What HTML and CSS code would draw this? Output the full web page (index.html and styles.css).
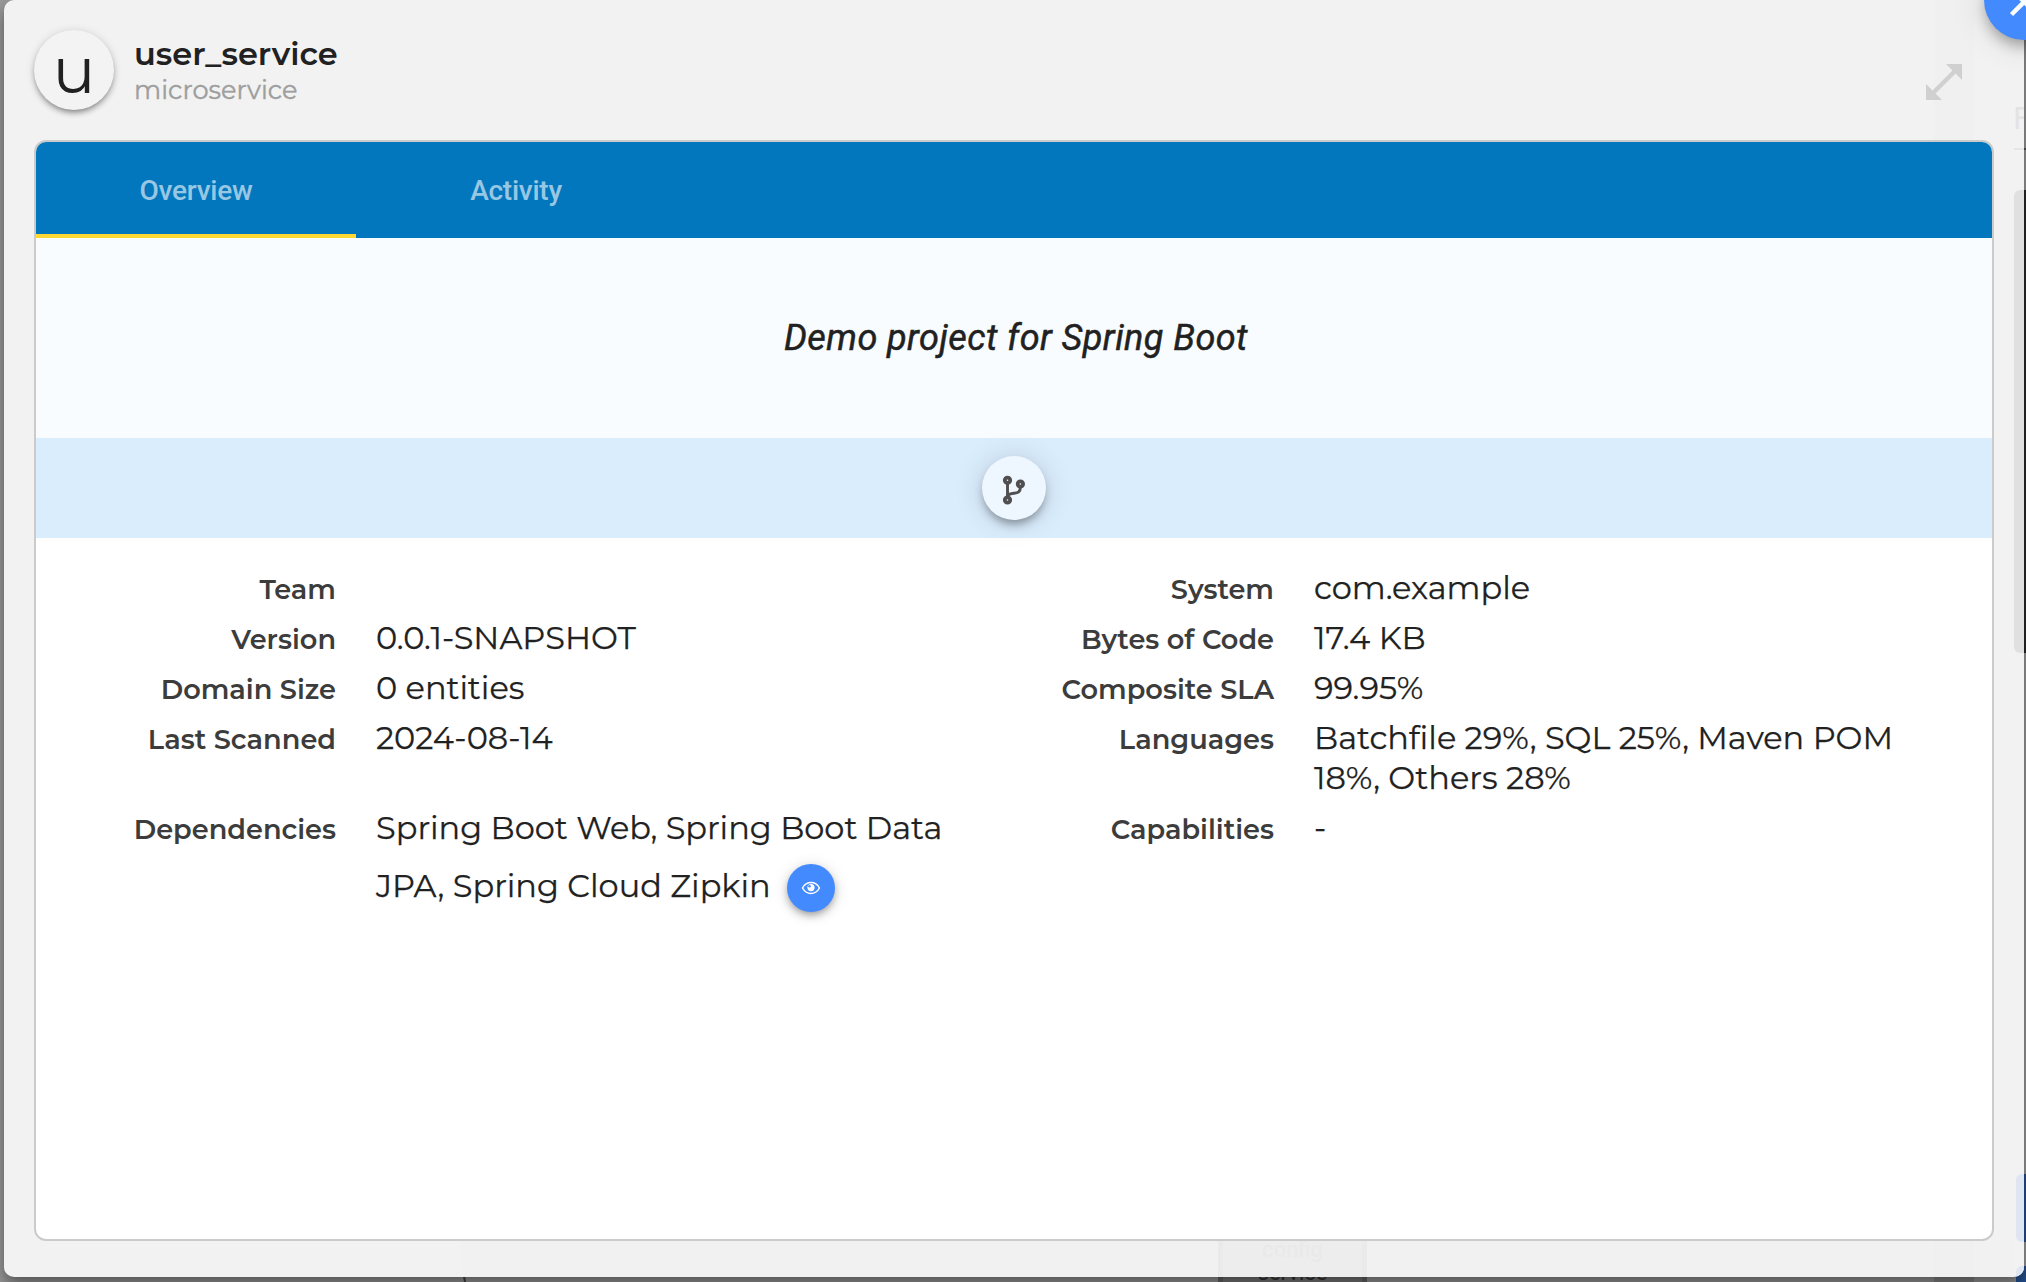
FILE: index.html
```html
<!DOCTYPE html>
<html lang="en">
<head>
<meta charset="utf-8">
<title>user_service</title>
<link rel="stylesheet" href="styles.css">
</head>
<body>
<div class="canvas" aria-hidden="true">
  <div class="rail"></div>
  <div class="rail-rule"></div>
  <div class="scroll-block"></div>
  <div class="chip chip-top"></div>
  <div class="chip chip-bottom"></div>
  <svg class="edge" width="20" height="42" viewBox="0 0 20 42"><path d="M2 0L9 42" stroke="#444" stroke-width="2"/></svg>
  <div class="node">service</div>
</div>
<main class="modal">
  <div class="ghost ghost-field"></div>
  <div class="ghost ghost-rail"></div>
  <div class="ghost ghost-block"></div>
  <div class="ghost ghost-chip"></div>
  <div class="ghost ghost-chip-low"></div>
  <div class="ghost ghost-rule"></div>
  <div class="ghost ghost-node">config</div>
  <div class="ghost ghost-letter">F</div>
  <header class="header">
    <div class="avatar">u</div>
    <div class="titles">
      <h1 class="name">user_service</h1>
      <p class="kind">microservice</p>
    </div>
    <svg class="expand" width="36" height="36" viewBox="0 0 36 36"><path d="M20 0h16v16zM0 20v16h16z" fill="#d0d0d0"/><path d="M6 30L30 6" stroke="#d0d0d0" stroke-width="4.500"/></svg>
  </header>
  <section class="panel">
    <nav class="tabs">
      <a class="tab active">Overview</a>
      <a class="tab">Activity</a>
    </nav>
    <div class="summary">Demo project for Spring Boot</div>
    <div class="actions">
      <button class="round branch" aria-label="Repository">
        <svg width="26" height="32" viewBox="0 0 26 32" fill="none" stroke="#4f4f4f" stroke-width="3.800"><circle cx="6.500" cy="6.300" r="2.700"/><circle cx="19.400" cy="10" r="2.700"/><circle cx="6.500" cy="26" r="2.700"/><path d="M6.500 9v14.500M19.400 13c0 5-2.500 5.800-6.400 6.200-3.500.4-5.500.8-6.500 2.300" stroke-width="2.900"/></svg>
      </button>
    </div>
    <div class="facts">
      <div class="label">Team</div><div class="value"></div>
      <div class="label">System</div><div class="value">com.example</div>
      <div class="label">Version</div><div class="value">0.0.1-SNAPSHOT</div>
      <div class="label">Bytes of Code</div><div class="value">17.4 KB</div>
      <div class="label">Domain Size</div><div class="value">0 entities</div>
      <div class="label">Composite SLA</div><div class="value">99.95%</div>
      <div class="label">Last Scanned</div><div class="value">2024-08-14</div>
      <div class="label">Languages</div><div class="value">Batchfile 29%, SQL 25%, Maven POM<br>18%, Others 28%</div>
      <div class="label">Dependencies</div>
      <div class="value">Spring Boot Web, Spring Boot Data
        <div class="deps-last"><span>JPA, Spring Cloud Zipkin</span>
        <button class="round eye" aria-label="Show dependencies"><svg width="20" height="14" viewBox="0 0 20 14"><path d="M1.500 7C5.500-.2 14.500-.2 18.500 7 14.500 14.200 5.500 14.200 1.500 7z" fill="none" stroke="#fff" stroke-width="1.500"/><circle cx="10" cy="6.600" r="3.600" fill="#fff"/><circle cx="8.500" cy="5.200" r="1.300" fill="#448aff"/></svg></button></div>
      </div>
      <div class="label">Capabilities</div><div class="value">-</div>
    </div>
  </section>
</main>
<button class="fab" aria-label="Close"><svg width="80" height="80" viewBox="0 0 80 80"><path d="M27.500 54.500L53 29M27.500 29L53 54.500" fill="none" stroke="#fff" stroke-width="4.500"/></svg></button>
</body>
</html>
```

FILE: styles.css
```css
* { box-sizing: border-box; }
body {
  margin: 0;
  width: 2026px;
  height: 1282px;
  overflow: hidden;
  position: relative;
  background: #999;
  padding: 0 2px 5px 4px;
  font-family: Montserrat, Inter, sans-serif;
  color: #212121;
}
button { border: 0; padding: 0; }

/* dimmed diagram behind the dialog */
.canvas { position: absolute; inset: 0; overflow: hidden; }
.canvas > * { position: absolute; }
.rail { left: 1934px; top: 1270px; width: 40px; height: 12px; background: #858585; }
.rail-rule { left: 2014px; top: 148px; width: 12px; height: 2px; background: #555; }
.scroll-block { left: 2014px; top: 190px; width: 12px; height: 463px; background: #292929; }
.chip { left: 2016px; width: 10px; background: #24508f; }
.chip-top { top: 1174px; height: 68px; }
.chip-bottom { top: 1266px; height: 16px; }
.edge { left: 456px; top: 1240px; }
.node {
  left: 1218px; top: 1200px; width: 149px; height: 82px;
  background: #787878; border: solid #666; border-width: 0 5px;
  padding-top: 60px; text-align: center;
  font: 22px/26px Roboto, sans-serif; color: #333;
}

.modal {
  position: relative;
  height: 1277px;
  border-radius: 10px;
  background: #f2f2f2;
  box-shadow: 0 8px 16px rgba(0,0,0,.45);
  overflow: hidden;
  padding: 30px;
  display: flex;
  flex-direction: column;
}

.ghost { position: absolute; }
.ghost-field { left: 454px; top: 1241px; width: 1556px; height: 36px; background: #f1f1f1; clip-path: polygon(0 0, 100% 0, 100% 100%, 6px 100%); }
.ghost-rail { left: 1930px; top: 0; width: 40px; height: 1277px; background: #f0f0f0; }
.ghost-block { left: 2010px; top: 190px; width: 10px; height: 463px; background: #e0e0e0; border-radius: 6px 0 0 6px; }
.ghost-chip { left: 2012px; top: 1174px; width: 8px; height: 68px; background: #dfe5f1; border-radius: 6px 0 0 6px; }
.ghost-chip-low { left: 2012px; top: 1266px; width: 8px; height: 11px; background: #dfe5f1; border-radius: 6px 0 0; }
.ghost-letter { left: 2009px; top: 100px; font: 32px/36px Roboto, sans-serif; color: #e3e3e3; }
.ghost-rule { left: 2010px; top: 148px; width: 10px; height: 2px; background: #e6e6e6; }
.ghost-node {
  left: 1214px; top: 1241px; width: 149px; height: 36px;
  background: #ededed; border: solid #eaeaea; border-width: 0 5px;
  text-align: center; font: 22px/18px Roboto, sans-serif; color: #e9e9e9;
}

.header { position: relative; display: flex; height: 110px; flex: none; }
.avatar {
  width: 80px; height: 80px; border-radius: 50%;
  background: #f3f3f3;
  box-shadow: 0 4px 6px -2px rgba(0,0,0,.45), 0 1px 10px rgba(0,0,0,.14);
  text-align: center; font-size: 64px; line-height: 80px;
}
.titles { margin-left: 20px; }
.name { margin: 4px 0 0; font-size: 32px; line-height: 40px; font-weight: 600; }
.kind { margin: 0; font-size: 25.6px; line-height: 32px; color: #9e9e9e; -webkit-text-stroke: .4px #9e9e9e; }
.expand { margin: 34px 32px 0 auto; }

.panel {
  position: relative;
  width: 1960px; height: 1101px;
  border: 2px solid #cbcbcb; border-radius: 12px;
  background: #fff; overflow: hidden;
}
.tabs { display: flex; height: 96px; background: #0277bd; }
.tab {
  width: 320px; height: 96px; text-align: center;
  font: 500 28px/98px Roboto, sans-serif;
  letter-spacing: -.25px;
  color: rgba(255,255,255,.6);
}
.active { box-shadow: inset 0 -4px #fdd835; }
.summary {
  height: 200px; background: #f8fcff; text-align: center;
  font: italic 400 36px/200px Roboto, sans-serif;
  letter-spacing: .45px;
  -webkit-text-stroke: .5px #212121;
  padding-left: 4px;
}
.actions { height: 100px; background: #daedfd; display: flex; align-items: center; justify-content: center; }
.round { border-radius: 50%; display: flex; align-items: center; justify-content: center; flex: none; }
.branch {
  position: relative;
  width: 64px; height: 64px; padding-top: 4px; background: #eef6ff;
  box-shadow: 0 6px 10px -2px rgba(0,0,0,.36), 0 2px 30px rgba(0,0,0,.14);
}
.facts {
  display: grid;
  grid-template-columns: 300px 638px 300px 638px;
  padding: 25px 40px;
}
.label { padding: 5px 40px 5px 0; text-align: right; font-size: 27.2px; line-height: 43px; height: 50px; font-weight: 600; color: #3c3c3c; white-space: nowrap; }
.value { padding: 5px 0; font-size: 32px; line-height: 40px; white-space: nowrap; -webkit-text-stroke: .25px #212121; }
.deps-last { display: flex; height: 60px; margin-top: 8px; align-items: center; line-height: 60px; }
.eye { width: 48px; height: 48px; margin: 4px 0 0 16px; background: #448aff; box-shadow: 0 4px 8px -2px rgba(0,0,0,.4), 0 2px 16px rgba(0,0,0,.14); }
.fab {
  position: absolute; left: 1984px; top: -40px; width: 80px; height: 80px;
  border-radius: 50%; background: #448aff;
  box-shadow: 0 8px 14px -2px rgba(0,0,0,.3), 0 4px 36px rgba(0,0,0,.12);
}
.fab svg { display: block; }
```
